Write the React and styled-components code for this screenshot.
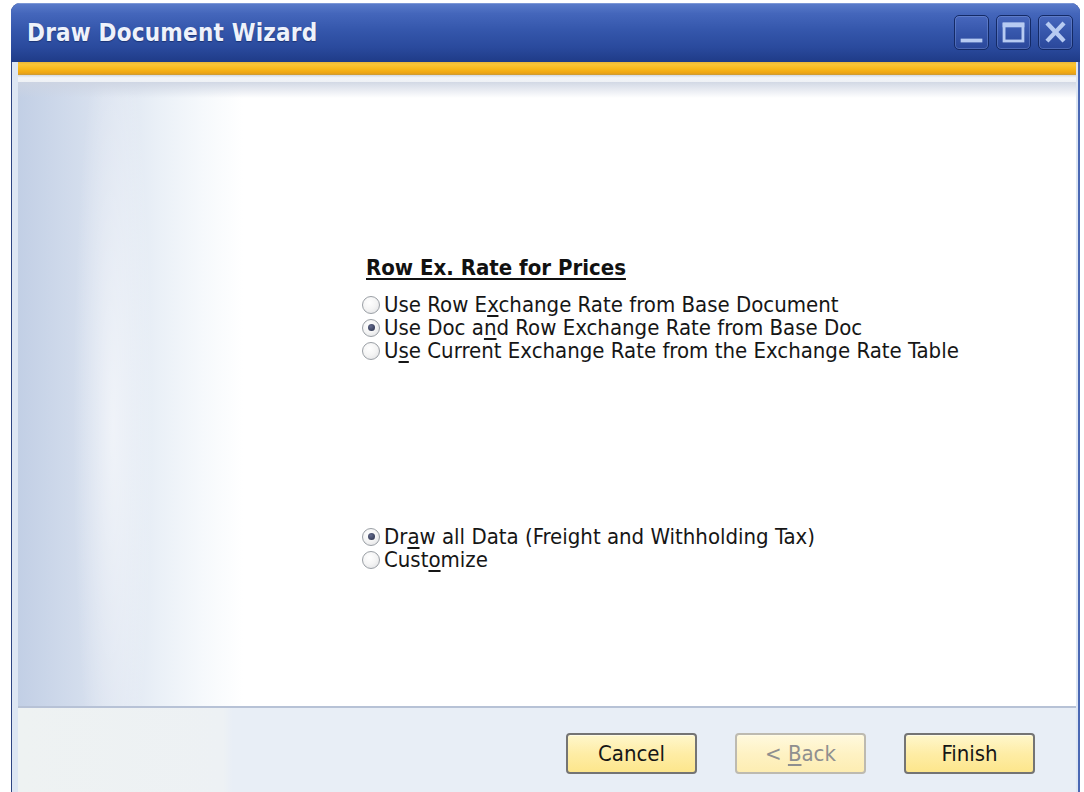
import React from 'react'
import styled, { createGlobalStyle } from 'styled-components'

const GlobalStyle = createGlobalStyle`
    html, body { margin: 0; padding: 0; background: #fff; }
    body { font-family: "DejaVu Sans Condensed", "DejaVu Sans", sans-serif; font-stretch: condensed; }
`

const Page = styled.div`
    padding: 3px 4px 0 11px;
`

const Window = styled.div`
    width: 1069px; height: 789px; display: flex; flex-direction: column;
    border-radius: 9px 9px 0 0; overflow: hidden; background: #21397e;
`

const TitleBar = styled.div`
    height: 59px; flex-shrink: 0; display: flex; align-items: center; justify-content: space-between;
    padding: 0 7px 0 16px;
    background: linear-gradient(180deg, #5b7ccb 0%, #4466bb 18%, #3557ac 45%, #2a4a9d 75%, #1f3b87 100%);
    box-shadow: inset 0 1px 0 #7c97d6;
`

const Title = styled.h1`
    margin: 0; color: #eef2fb; font-size: 24px; font-weight: bold; letter-spacing: 0.2px;
    font-family: "DejaVu Sans Condensed", "DejaVu Sans", sans-serif; font-stretch: condensed;
    text-shadow: 0 1px 1px rgba(10, 25, 70, 0.5);
`

const Controls = styled.div`
    display: flex; gap: 7px;
`

const ControlButton = styled.button`
    width: 35px; height: 35px; padding: 0; display: flex; align-items: center; justify-content: center;
    border: 1px solid #142a66; border-radius: 5px;
    background: linear-gradient(180deg, #4767bd 0%, #3656ab 50%, #2a479a 100%);
    box-shadow: inset 0 0 0 1px rgba(140, 165, 225, 0.35);
`

const Frame = styled.div`
    flex: 1; display: flex; flex-direction: column; min-height: 0;
    border-left: 1px solid #2e4582; border-right: 2px solid #4a68b4;
    padding: 0 2px 0 6px; background: #dde6f3;
`

const Accent = styled.div`
    height: 13px; flex-shrink: 0;
    background: linear-gradient(180deg, #e9b73a 0%, #fbc535 20%, #f8b719 55%, #eea513 85%, #c99a3a 100%);
`

const Sheen = styled.div`
    height: 7px; flex-shrink: 0;
    background: linear-gradient(180deg, #d4d9e2 0%, #f3f5f8 40%, #eef1f5 100%);
`

const Content = styled.div`
    flex: 1; display: flex; flex-direction: column;
    background:
        linear-gradient(180deg, rgba(205, 212, 226, 0.9) 0px, rgba(255, 255, 255, 0) 16px),
        radial-gradient(ellipse 40px 420px at 95px 55%, rgba(255, 255, 255, 0.55), rgba(255, 255, 255, 0)),
        linear-gradient(90deg, #c2cfe5 0px, #cdd8ea 40px, #dbe3f0 90px, #eaf0f7 140px, #f6f9fc 185px, #fff 225px);
`

const Group = styled.div`
    display: flex; flex-direction: column; margin-left: 344px;
    margin-top: ${p => p.$top}px;
`

const Heading = styled.h2`
    margin: 0 0 14px 4px; font-size: 22px; font-weight: bold; line-height: 22px; color: #111;
    text-decoration: underline; text-underline-offset: 3px;
`

const Option = styled.label`
    display: flex; align-items: center; gap: 4px; height: 23px;
    font-size: 22px; color: #161616; white-space: nowrap;
    u { text-underline-offset: 3px; }
`

const Radio = styled.span`
    width: 18px; height: 18px; box-sizing: border-box; border-radius: 50%; flex-shrink: 0;
    border: 1px solid #9a9fa5; display: flex; align-items: center; justify-content: center;
    background: radial-gradient(circle at 40% 35%, #ffffff 0%, #f4f4f4 50%, #dcdde0 100%);
    &::after {
        content: ""; width: 7px; height: 7px; border-radius: 50%;
        background: ${p => (p.$checked ? 'radial-gradient(circle at 40% 35%, #636a8c, #262c46)' : 'transparent')};
    }
`

const Footer = styled.div`
    height: 86px; flex-shrink: 0; display: flex; justify-content: flex-end; align-items: flex-start;
    gap: 38px; padding: 25px 41px 0 0; box-sizing: border-box;
    border-top: 2px solid #b7c2d6;
    background: linear-gradient(90deg, #eef2f2 0px, #edf1f4 205px, #e8eef6 215px, #e8eef6 100%);
`

const Button = styled.button`
    width: 131px; height: 41px; box-sizing: border-box; padding: 0;
    font-family: inherit; font-stretch: condensed; font-size: 22px;
    border-radius: 4px; cursor: pointer;
    border: 2px solid ${p => (p.disabled ? '#bdbab0' : '#747474')};
    color: ${p => (p.disabled ? '#8f8f8f' : '#161616')};
    background: ${p => (p.disabled
        ? 'linear-gradient(180deg, #fff9de 0%, #fef2c4 50%, #fdedb2 100%)'
        : 'linear-gradient(180deg, #fff7cc 0%, #feeda6 50%, #fde68c 100%)')};
    box-shadow: inset 0 1px 0 #fffbe6;
    u { text-underline-offset: 3px; }
`

const ICON = '#b7cbf2'

function Minimize() {
    return (
        <svg width="35" height="35" viewBox="0 0 35 35">
            <rect x="6" y="24" width="23" height="4" fill={ICON} />
        </svg>
    )
}

function Maximize() {
    return (
        <svg width="35" height="35" viewBox="0 0 35 35">
            <rect x="7.5" y="8.5" width="20" height="18" fill="none" stroke={ICON} strokeWidth="3" />
            <rect x="6" y="7" width="23" height="5" fill={ICON} />
        </svg>
    )
}

function Close() {
    return (
        <svg width="35" height="35" viewBox="0 0 35 35">
            <path d="M10 9 L25 25 M25 9 L10 25" stroke={ICON} strokeWidth="4.5" strokeLinecap="square" />
        </svg>
    )
}

const rateOptions = [
    { key: 'row', label: <>Use Row E<u>x</u>change Rate from Base Document</> },
    { key: 'doc', label: <>Use Doc a<u>n</u>d Row Exchange Rate from Base Doc</>, checked: true },
    { key: 'cur', label: <>U<u>s</u>e Current Exchange Rate from the Exchange Rate Table</> },
]

const drawOptions = [
    { key: 'all', label: <>Dr<u>a</u>w all Data (Freight and Withholding Tax)</>, checked: true },
    { key: 'custom', label: <>Cust<u>o</u>mize</> },
]

export default function App() {
    return (
        <>
            <GlobalStyle />
            <Page>
                <Window>
                    <TitleBar>
                        <Title>Draw Document Wizard</Title>
                        <Controls>
                            <ControlButton><Minimize /></ControlButton>
                            <ControlButton><Maximize /></ControlButton>
                            <ControlButton><Close /></ControlButton>
                        </Controls>
                    </TitleBar>
                    <Frame>
                        <Accent />
                        <Sheen />
                        <Content>
                            <Group $top={175}>
                                <Heading>Row Ex. Rate for Prices</Heading>
                                {rateOptions.map(o => (
                                    <Option key={o.key}><Radio $checked={o.checked} /><span>{o.label}</span></Option>
                                ))}
                            </Group>
                            <Group $top={163}>
                                {drawOptions.map(o => (
                                    <Option key={o.key}><Radio $checked={o.checked} /><span>{o.label}</span></Option>
                                ))}
                            </Group>
                        </Content>
                        <Footer>
                            <Button>Cancel</Button>
                            <Button disabled>&lt; <u>B</u>ack</Button>
                            <Button>Finish</Button>
                        </Footer>
                    </Frame>
                </Window>
            </Page>
        </>
    )
}
